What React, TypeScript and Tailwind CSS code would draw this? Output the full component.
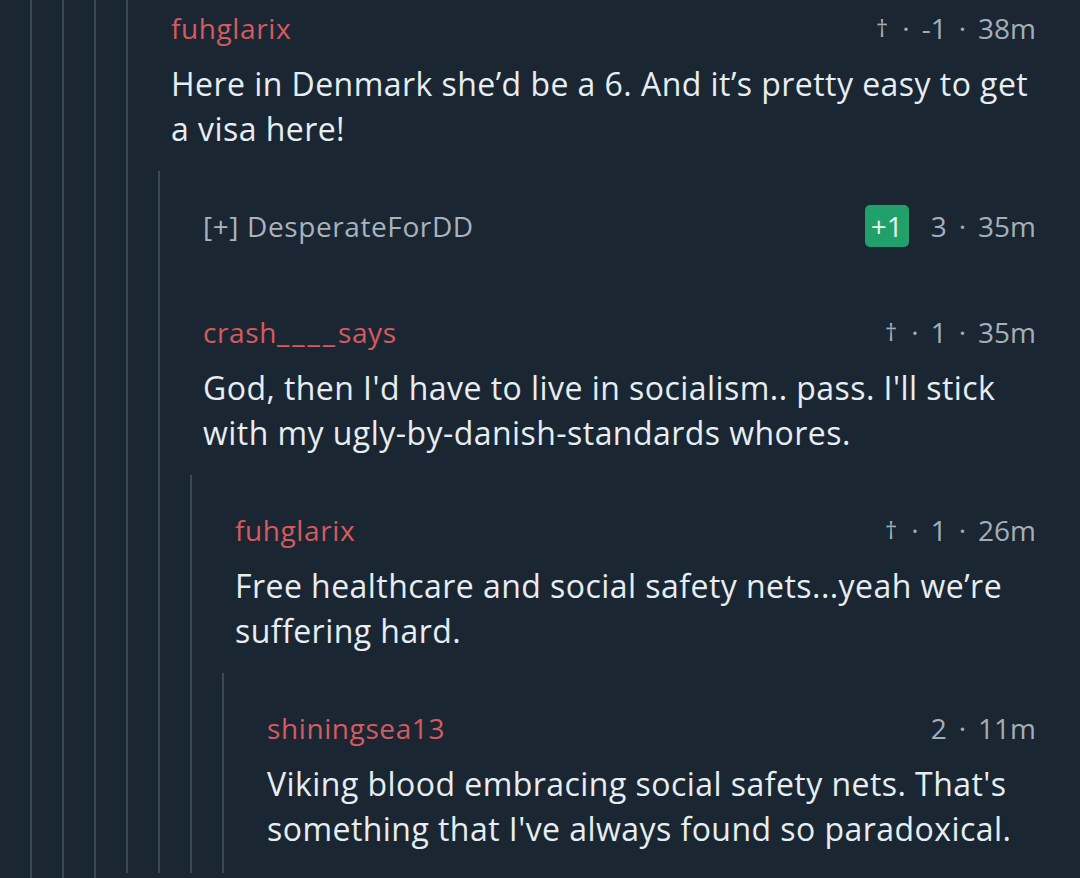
import React from "react";

type Comment = {
    author: string;
    meta: string[];
    body?: string[];
    collapsed?: boolean;
    badge?: string;
};

const line = "border-l-2 border-[#3a4a59]";

// underscores in the source font are drawn as separate dashes
function Name({ text }: { text: string }) {
    const parts = text.split(/(_+)/);
    return (
        <>
            {parts.map((p, i) =>
                p.startsWith("_") ? (
                    <span key={i} className="tracking-[3px]">
                        {p}
                    </span>
                ) : (
                    <span key={i}>{p}</span>
                )
            )}
        </>
    );
}

function Meta({ items }: { items: string[] }) {
    return (
        <span className="flex items-center whitespace-nowrap">
            {items.map((it, i) => (
                <React.Fragment key={i}>
                    {i > 0 && <span className="px-[12px]">·</span>}
                    <span className={it === "†" ? "text-[24px] pr-[2px]" : ""}>{it}</span>
                </React.Fragment>
            ))}
        </span>
    );
}

function Header({ c }: { c: Comment }) {
    return (
        <div className="flex items-center justify-between h-[38px] leading-[38px] text-[28px]">
            {c.collapsed ? (
                <span className="tracking-[0.6px] text-[#a9b3bd]">[+] {c.author}</span>
            ) : (
                <span className="tracking-[0.6px] text-[#d65a5f]">
                    <Name text={c.author} />
                </span>
            )}
            <div className="flex items-center text-[#a4aeb8]">
                {c.badge && (
                    <span className="mr-[22px] flex h-[42px] w-[44px] items-center justify-center rounded-[5px] bg-[#22a06b] text-[#e9f7ef]">
                        {c.badge}
                    </span>
                )}
                <Meta items={c.meta} />
            </div>
        </div>
    );
}

function CommentBlock({ c, top = "pt-[36px]", bottom = "" }: { c: Comment; top?: string; bottom?: string }) {
    return (
        <div className={`${top} ${bottom} pl-[13px]`}>
            <Header c={c} />
            {c.body && (
                <div className="mt-[14px] text-[32px] leading-[45px] tracking-[0.45px] text-[#e6edf3]">
                    {c.body.map((l, i) => (
                        <div key={i} className="whitespace-nowrap">
                            {l}
                        </div>
                    ))}
                </div>
            )}
        </div>
    );
}

export default function App() {
    return (
        <div
            className="h-[878px] w-[1080px] overflow-hidden bg-[#1b2633] pl-[30px] pr-[44px]"
            style={{ fontFamily: "'Open Sans', 'Noto Sans', sans-serif" }}
        >
            <div className={`h-full ${line} pl-[30px]`}>
                <div className={`h-full ${line} pl-[30px]`}>
                    <div className={`h-full ${line} pl-[30px]`}>
                        <div className={`${line} pl-[30px]`}>
                            <CommentBlock
                                top="pt-[9px]"
                                c={{
                                    author: "fuhglarix",
                                    meta: ["†", "-1", "38m"],
                                    body: ["Here in Denmark she’d be a 6. And it’s pretty easy to get", "a visa here!"],
                                }}
                            />
                            <div className={`mt-[20px] ${line} pl-[30px]`}>
                                <CommentBlock
                                    bottom="pb-[32px]"
                                    c={{ author: "DesperateForDD", meta: ["3", "35m"], collapsed: true, badge: "+1" }}
                                />
                                <CommentBlock
                                    c={{
                                        author: "crash____says",
                                        meta: ["†", "1", "35m"],
                                        body: [
                                            "God, then I'd have to live in socialism.. pass. I'll stick",
                                            "with my ugly-by-danish-standards whores.",
                                        ],
                                    }}
                                />
                                <div className={`mt-[20px] ${line} pl-[30px]`}>
                                    <CommentBlock
                                        c={{
                                            author: "fuhglarix",
                                            meta: ["†", "1", "26m"],
                                            body: ["Free healthcare and social safety nets...yeah we’re", "suffering hard."],
                                        }}
                                    />
                                    <div className={`mt-[20px] ${line} pl-[30px]`}>
                                        <CommentBlock
                                            bottom="pb-[22px]"
                                            c={{
                                                author: "shiningsea13",
                                                meta: ["2", "11m"],
                                                body: [
                                                    "Viking blood embracing social safety nets. That's",
                                                    "something that I've always found so paradoxical.",
                                                ],
                                            }}
                                        />
                                    </div>
                                </div>
                            </div>
                        </div>
                    </div>
                </div>
            </div>
        </div>
    );
}
